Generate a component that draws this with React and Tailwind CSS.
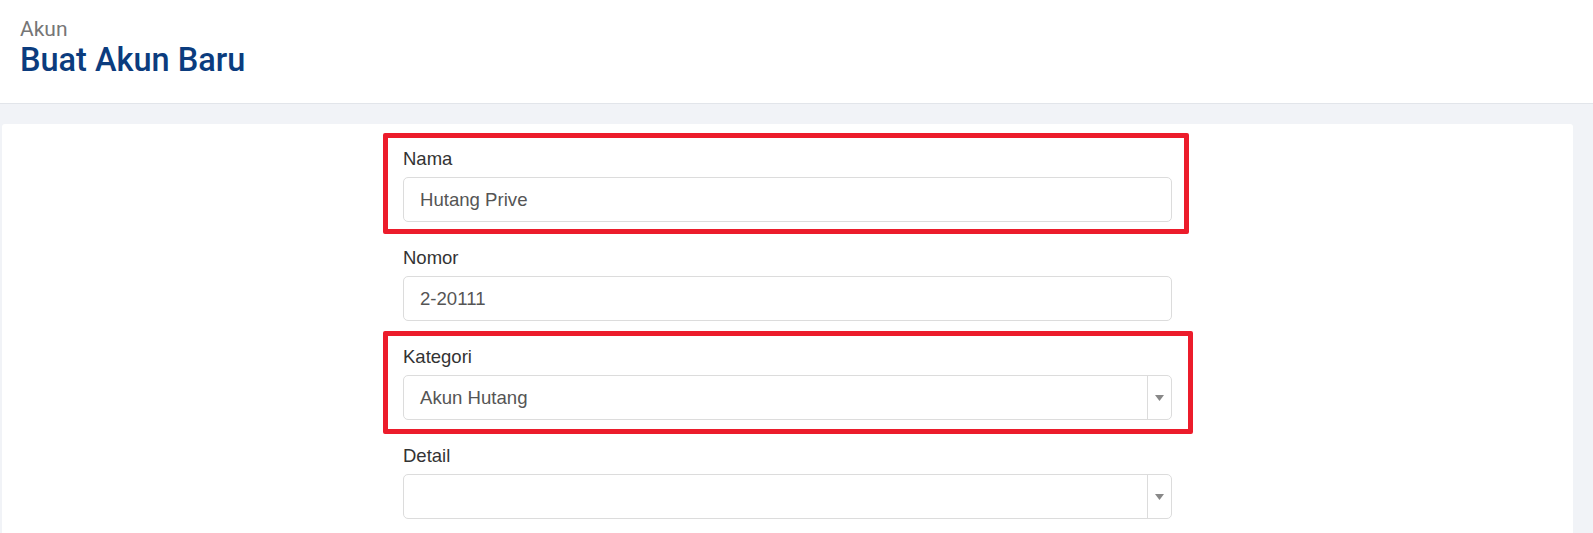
function Field({ label, value, select, highlight }) {
  return (
    <div className="relative mb-[24px]">
      {highlight && (
        <div
          className={
            highlight === "wide"
              ? "pointer-events-none absolute -top-[14px] -bottom-[14px] -left-[20px] -right-[21px] rounded-[2px] border-[5px] border-[#ec1c2b]"
              : "pointer-events-none absolute -top-[14px] -bottom-[12px] -left-[20px] -right-[17px] rounded-[2px] border-[5px] border-[#ec1c2b]"
          }
        />
      )}

      <label className="mb-[6px] block text-[18.5px] leading-[24px] text-[#333333]">
        {label}
      </label>

      <div className="flex h-[45px] items-stretch rounded-[5px] border border-[#dcdcdc] bg-white">
        <div className="flex flex-1 items-center px-[16px] text-[18.6px] text-[#555555]">
          {value}
        </div>

        {select && (
          <div className="flex w-[24px] items-center justify-center border-l border-[#dcdcdc]">
            <svg width="9" height="6" viewBox="0 0 9 6">
              <path d="M0 0 L9 0 L4.5 6 Z" fill="#888888" />
            </svg>
          </div>
        )}
      </div>
    </div>
  );
}

export default function App() {
  return (
    <div className="min-h-screen bg-[#f1f3f7] font-['Liberation_Sans',Arial,sans-serif]">

      <div className="h-[104px] border-b border-[#e2e5ea] bg-white px-[20px] pt-[17px] font-['Roboto',sans-serif]">

        <div className="text-[21px] leading-[24px] text-[#767676]">
          Akun
        </div>

        <h1 className="text-[32.5px] font-medium leading-[38px] text-[#0b3c7e]">
          Buat Akun Baru
        </h1>

      </div>

      <div className="pt-[20px] pl-[2px] pr-[20px]">

        <div className="min-h-[420px] rounded-t-[3px] bg-white pt-[23px]">

          <div className="mx-auto w-[769px]">

            <Field label="Nama" value="Hutang Prive" highlight="normal" />

            <Field label="Nomor" value="2-20111" />

            <Field label="Kategori" value="Akun Hutang" select highlight="wide" />

            <Field label="Detail" value="" select />

          </div>

        </div>

      </div>

    </div>
  );
}
